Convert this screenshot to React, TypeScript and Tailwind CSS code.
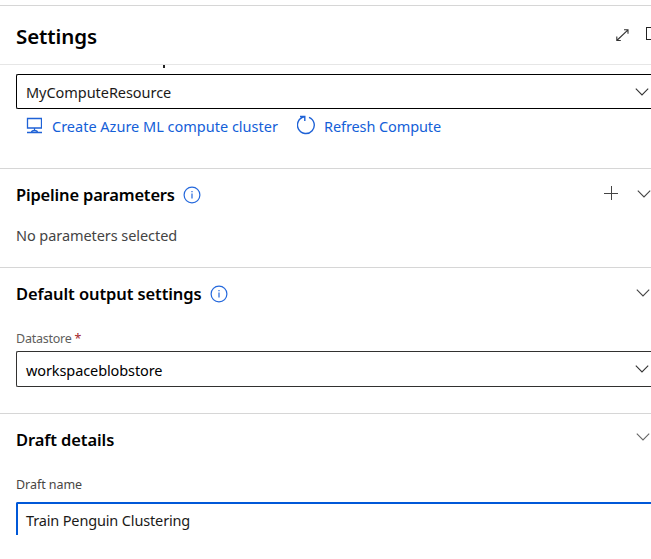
import type { ReactNode } from 'react';

function Chevron({ color = '#333' }: { color?: string }) {
  return (
    <svg width="14" height="8" viewBox="0 0 14 8" fill="none" className="block shrink-0">
      <path d="M.8.7 7 6.900 13.200.7" stroke={color} strokeWidth="1.1" />
    </svg>
  );
}

function Info() {
  return (
    <svg width="18" height="18" viewBox="0 0 18 18" fill="none" className="block shrink-0">
      <circle cx="9" cy="9" r="7.9" stroke="#2468dc" strokeWidth="1.2" />
      <path d="M9 7.5v5M9 5v1.3" stroke="#2468dc" strokeWidth="1.2" />
    </svg>
  );
}

function Heading({ children, tracking }: { children: ReactNode; tracking: string }) {
  return <h2 className={`whitespace-nowrap text-[16.5px] leading-6 font-semibold text-black ${tracking}`}>{children}</h2>;
}

export default function App() {
  return (
    <div className="h-[559px] w-[651px] overflow-hidden bg-white pt-[5px] font-['Noto_Sans','Open_Sans',sans-serif] text-[#1b1a19]">
      <header className="flex h-[60px] items-center border-y border-t-[#d6d6d6] border-b-[#e6e6e6] pl-4">
        <h1 className="mt-px text-[20.5px] leading-7 font-semibold tracking-[-0.1px] text-black">Settings</h1>
        <svg width="13" height="13" viewBox="0 0 13 13" fill="none" stroke="#333" strokeWidth="1.1" className="ml-auto shrink-0">
          <path d="M.8 11.500 12 .8M8 .8h4v4M.8 7.500v4h4" />
        </svg>
        <div className="mt-[-3px] mr-[-9px] ml-[17px] h-[13px] w-[14px] shrink-0 border border-[#222]" />
      </header>

      <section className="h-[103px]">
        <div className="flex h-[9px] pl-[163px]">
          <div className="h-[3px] w-[2px] bg-[#222]" />
        </div>
        <div className="ml-4 flex h-[35px] items-center rounded-l-[2px] border border-r-0 border-black pr-[2px] pl-[9px]">
          <span className="mr-auto text-[14.5px] leading-5 tracking-[-0.05px]">MyComputeResource</span>
          <Chevron />
        </div>
        <div className="flex h-[35px] items-center pl-[26px] text-[14.5px] text-[#1460d8]">
          <svg width="16" height="17" viewBox="0 0 16 17" fill="none" stroke="#1f62d6" strokeWidth="1.3" className="mt-[-2px] shrink-0">
            <path d="M1.500 1.500h14v9.500h-14zM8.500 11v3M1 15.500h4.500M11.500 15.500H16M5.500 15.500c0-1.200 1.200-2 3-2s3 .8 3 2z" />
          </svg>
          <span className="ml-[10px] w-[226px] whitespace-nowrap">Create Azure ML compute cluster</span>
          <svg width="19" height="20" viewBox="0 0 19 20" fill="none" stroke="#1f62d6" strokeWidth="1.4" className="mt-[-3px] ml-[19px] shrink-0">
            <path d="M12 2.300A8.400 8.400 0 1 1 7.500 1.800M3 1.500h4.800V6" />
          </svg>
          <span className="ml-[8px] whitespace-nowrap tracking-[-0.1px]">Refresh Compute</span>
        </div>
      </section>

      <section className="h-[99px] border-t border-[#d6d6d6] pl-4">
        <div className="mt-[14px] flex h-6 items-center">
          <Heading tracking="tracking-[-0.18px]">Pipeline parameters</Heading>
          <div className="ml-2"><Info /></div>
          <svg width="14" height="14" viewBox="0 0 14 14" fill="none" stroke="#444" className="mt-[-4px] mr-[19px] ml-auto">
            <path d="M0 7.500h14M7.500 0v14" />
          </svg>
          <div className="mt-[-3px]"><Chevron color="#444" /></div>
        </div>
        <p className="mt-[18px] text-[14.5px] leading-5 tracking-[-0.07px] text-[#444]">No parameters selected</p>
      </section>

      <section className="h-[146px] border-t border-[#d6d6d6] pl-4">
        <div className="mt-[14px] flex h-6 items-center pr-px">
          <Heading tracking="tracking-[-0.1px]">Default output settings</Heading>
          <div className="ml-2"><Info /></div>
          <div className="mt-[-3px] ml-auto"><Chevron color="#444" /></div>
        </div>
        <div className="mt-[23px] text-[12.5px] leading-5 tracking-[-0.25px] text-[#605e5c]">
          Datastore <span className="text-[#a4262c]">*</span>
        </div>
        <div className="mt-[2px] flex h-[36px] items-center rounded-l-[2px] border border-r-0 border-[#323130] pr-[2px] pl-[9px]">
          <span className="mt-[2px] mr-auto text-[14.5px] leading-5 tracking-[-0.1px] text-black">workspaceblobstore</span>
          <Chevron />
        </div>
      </section>

      <section className="h-[122px] overflow-hidden border-t border-[#d6d6d6] pl-4">
        <div className="mt-[14px] flex h-6 items-center justify-between pr-px">
          <Heading tracking="tracking-[-0.1px]">Draft details</Heading>
          <div className="mt-[-6px]"><Chevron color="#666" /></div>
        </div>
        <div className="mt-[23px] text-[12.5px] leading-5 tracking-[-0.05px] text-[#484644]">Draft name</div>
        <div className="mt-[7px] flex h-[36px] items-center rounded-tl-[2px] border-2 border-r-0 border-[#0058d8] pl-2">
          <span className="text-[14.5px] leading-5 tracking-[-0.15px]">Train Penguin Clustering</span>
        </div>
      </section>
    </div>
  );
}
